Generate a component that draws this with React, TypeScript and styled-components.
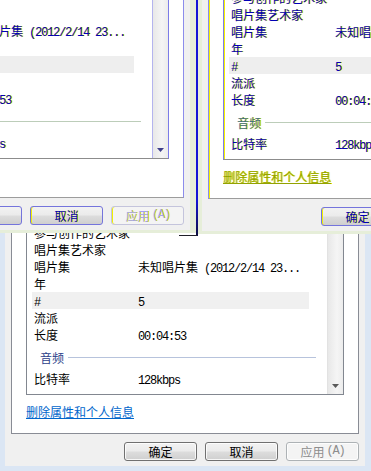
import React from 'react';
import styled, { createGlobalStyle, ThemeProvider } from 'styled-components';

type Pal = {
  outer: string;
  outerBottom: number;
  frame: string;
  text: string;
  shadow: string;
  panelSide: string;
  panelBottom: string;
  inner: string;
  listSide: string;
  listBottom: string;
  hl: string;
  header: string;
  rule: string;
  link: string;
  btnBorder: string;
  btnInner: string;
  btnText: string;
  disText: string;
  disBorder: string;
  sbBorder: string;
  arrow: string;
};

const normal: Pal = {
  outer: '#dbe6f4',
  outerBottom: 5,
  frame: '#f0f0f0',
  text: '#000000',
  shadow: 'none',
  panelSide: '#898c95',
  panelBottom: '#898c95',
  inner: 'transparent',
  listSide: '#828790',
  listBottom: '#828790',
  hl: '#f0f0f0',
  header: '#2c3f8a',
  rule: '#b7c3dc',
  link: '#0066cc',
  btnBorder: '#707070',
  btnInner: 'inset 0 0 0 1px rgba(255,255,255,0.8)',
  btnText: '#000000',
  disText: '#8d8d8d',
  disBorder: '#adb2b5',
  sbBorder: '#e2e2e2',
  arrow: '#5a5a5a',
};

const glitch: Pal = {
  outer: '#e6eed9',
  outerBottom: 3,
  frame: '#f0f0f0',
  text: '#0000b8',
  shadow: '1px 0 0 #e8e800',
  panelSide: '#8c8cec',
  panelBottom: '#9c9c9c',
  inner: '#f2f200',
  listSide: '#7c7ce8',
  listBottom: '#8c8c8c',
  hl: '#eeeeee',
  header: '#3d6c86',
  rule: '#bccdb9',
  link: '#93a200',
  btnBorder: '#7474dc',
  btnInner: 'inset 1px 0 0 #f0f000',
  btnText: '#0000b8',
  disText: '#a4a4ec',
  disBorder: '#c4c4dc',
  sbBorder: '#b4b4ee',
  arrow: '#40408c',
};

const Global = createGlobalStyle`
  html, body { margin: 0; padding: 0; background: #ffffff; overflow: hidden; }
`;

const Desktop = styled.div`
  position: relative;
  width: 371px;
  height: 471px;
  overflow: hidden;
  background: #ffffff;
`;

const Win = styled.div<{ $x: number; $y: number }>`
  position: absolute;
  left: ${(p) => p.$x}px;
  top: ${(p) => p.$y}px;
  width: 371px;
  box-sizing: border-box;
  border-style: solid;
  border-color: ${(p) => p.theme.outer};
  border-width: 0 6px ${(p) => p.theme.outerBottom}px 5px;
  background: ${(p) => p.theme.frame};
  padding: 0 6px 5px 6px;
  font-family: "Noto Sans CJK SC", "Noto Sans", sans-serif;
  font-size: 12px;
  color: ${(p) => p.theme.text};
  text-shadow: ${(p) => p.theme.shadow};
`;

const Panel = styled.div`
  background: #ffffff;
  border: 1px solid ${(p) => p.theme.panelSide};
  border-bottom-color: ${(p) => p.theme.panelBottom};
  box-shadow: inset 1px 0 0 ${(p) => p.theme.inner};
  padding: 14px 14px 13px 14px;
`;

const ListBox = styled.div`
  display: flex;
  background: #ffffff;
  border: 1px solid ${(p) => p.theme.listSide};
  border-bottom-color: ${(p) => p.theme.listBottom};
  box-shadow: inset 1px 0 0 ${(p) => p.theme.inner};
`;

const Rows = styled.div`
  flex: 1;
  display: flex;
  flex-direction: column;
  padding: 8px 11px 7px 5px;
`;

const Row = styled.div<{ $hl?: boolean }>`
  display: flex;
  height: 17px;
  line-height: 17px;
  white-space: nowrap;
  background: ${(p) => (p.$hl ? p.theme.hl : 'transparent')};
  margin-right: ${(p) => (p.$hl ? 7 : 0)}px;
`;

const Label = styled.span`
  flex: none;
  width: 106px;
  box-sizing: border-box;
  padding-left: 2px;
`;

const Value = styled.span`
  white-space: nowrap;
`;

const Mono = styled.span`
  font-family: "Liberation Mono", monospace;
  font-size: 12px;
  letter-spacing: -1.2px;
  white-space: pre;
`;

const GroupHeader = styled.div`
  display: flex;
  align-items: center;
  gap: 4px;
  height: 18px;
  margin: 5px 0 4px;
  padding-left: 8px;
  color: ${(p) => p.theme.header};
  &::after {
    content: '';
    flex: 1;
    height: 1px;
    background: ${(p) => p.theme.rule};
  }
`;

const Scrollbar = styled.div`
  flex: none;
  width: 16px;
  box-sizing: border-box;
  border-left: 1px solid ${(p) => p.theme.sbBorder};
  background: linear-gradient(90deg, #e8e8e8, #f5f5f5 60%, #ececec);
  display: flex;
  flex-direction: column;
  justify-content: flex-end;
`;

const ArrowBtn = styled.div`
  height: 17px;
  display: flex;
  align-items: center;
  justify-content: center;
  padding-top: 1px;
`;

const Link = styled.a`
  display: block;
  margin-top: 8px;
  line-height: 17px;
  color: ${(p) => p.theme.link};
  text-decoration: underline;
  cursor: pointer;
`;

const ButtonRow = styled.div`
  display: flex;
  justify-content: flex-end;
  gap: 8px;
  margin-top: 8px;
`;

const Btn = styled.button<{ $disabled?: boolean }>`
  width: 73px;
  height: 19px;
  box-sizing: border-box;
  padding: 0;
  border-radius: 3px;
  border: 1px solid ${(p) => (p.$disabled ? p.theme.disBorder : p.theme.btnBorder)};
  background: ${(p) =>
    p.$disabled
      ? '#f4f4f4'
      : 'linear-gradient(#f2f2f2 0%, #ebebeb 48%, #dddddd 52%, #cfcfcf 100%)'};
  box-shadow: ${(p) => p.theme.btnInner};
  color: ${(p) => (p.$disabled ? p.theme.disText : p.theme.btnText)};
  text-shadow: ${(p) => p.theme.shadow};
  font-family: "Noto Sans CJK SC", "Noto Sans", sans-serif;
  font-size: 12px;
  line-height: 17px;
  display: flex;
  align-items: center;
  justify-content: center;
`;

const Accel = styled(Mono)`
  margin-left: 2px;
`;

const BlueLine = styled.div`
  position: absolute;
  left: 196px;
  top: 0;
  width: 2px;
  height: 236px;
  background: linear-gradient(#1414d6 0%, #1414d6 85%, #101040 100%);
`;

const DarkLine = styled.div`
  position: absolute;
  left: 179px;
  top: 235px;
  width: 18px;
  height: 1px;
  background: #202028;
`;

function Text({ s }: { s: string }) {
  const parts = s.match(/[\x00-\x7f]+|[^\x00-\x7f]+/g) || [];
  return (
    <>
      {parts.map((p, i) =>
        /^[\x00-\x7f]+$/.test(p) ? <Mono key={i}>{p}</Mono> : <span key={i}>{p}</span>
      )}
    </>
  );
}

type Item = { label: string; value?: string; hl?: boolean };

const media: Item[] = [
  { label: '参与创作的艺术家' },
  { label: '唱片集艺术家' },
  { label: '唱片集', value: '未知唱片集 (2012/2/14 23...' },
  { label: '年' },
  { label: '#', value: '5', hl: true },
  { label: '流派' },
  { label: '长度', value: '00:04:53' },
];

const audio: Item[] = [{ label: '比特率', value: '128kbps' }];

function PropRow({ item }: { item: Item }) {
  return (
    <Row $hl={item.hl}>
      <Label>
        <Text s={item.label} />
      </Label>
      <Value>{item.value ? <Text s={item.value} /> : null}</Value>
    </Row>
  );
}

function Dialog({ x, y, pal }: { x: number; y: number; pal: Pal }) {
  return (
    <ThemeProvider theme={pal}>
      <Win $x={x} $y={y}>
        <Panel>
          <ListBox>
            <Rows>
              {media.map((it) => (
                <PropRow key={it.label} item={it} />
              ))}
              <GroupHeader>音频</GroupHeader>
              {audio.map((it) => (
                <PropRow key={it.label} item={it} />
              ))}
            </Rows>
            <Scrollbar>
              <ArrowBtn>
                <svg width="7" height="4" viewBox="0 0 7 4">
                  <polygon points="0,0 7,0 3.5,4" fill={pal.arrow} />
                </svg>
              </ArrowBtn>
            </Scrollbar>
          </ListBox>
          <Link>删除属性和个人信息</Link>
        </Panel>
        <ButtonRow>
          <Btn>确定</Btn>
          <Btn>取消</Btn>
          <Btn $disabled>
            应用<Accel>(A)</Accel>
          </Btn>
        </ButtonRow>
      </Win>
    </ThemeProvider>
  );
}

export default function App() {
  return (
    <>
      <Global />
      <Desktop>
        <Dialog x={0} y={200} pal={normal} />
        <Dialog x={-175} y={-36} pal={glitch} />
        <Dialog x={197} y={-35} pal={glitch} />
        <BlueLine />
        <DarkLine />
      </Desktop>
    </>
  );
}
